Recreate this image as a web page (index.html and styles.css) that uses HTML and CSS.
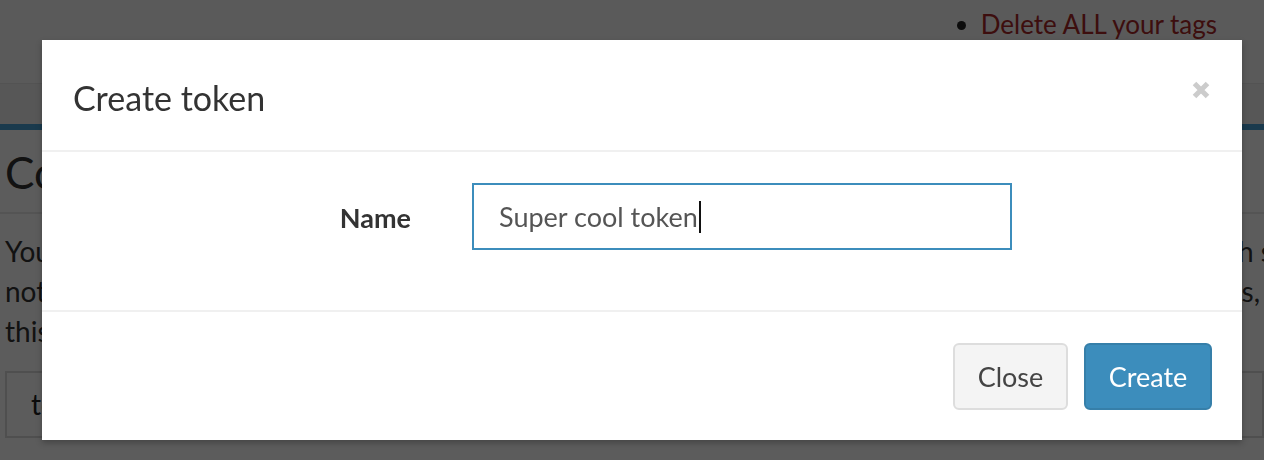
FILE: index.html
```html
<!DOCTYPE html>
<html lang="en">
<head>
<meta charset="utf-8">
<title>Create token</title>
<link rel="stylesheet" href="styles.css">
</head>
<body>
<div class="page">
  <header class="topbar">
    <ul class="actions">
      <li>Export your history</li>
      <li><a class="danger" href="#">Delete ALL your tags</a></li>
    </ul>
  </header>
  <nav class="tabs"></nav>
  <main class="content">
    <h2 class="heading">Configured tokens</h2>
    <hr class="rule">
    <div class="para">
      <div class="line"><span>You can use tokens to authenticate API requests</span><span class="cut">with s</span></div>
      <div class="line"><span>not share them with anyone. If a token leaks, revoke it</span><span>tokens,</span></div>
      <div class="line"><span>this cannot be undone</span><span></span></div>
    </div>
    <div class="tokenbox">token name</div>
  </main>
</div>
<div class="backdrop"></div>
<div class="modal" role="dialog">
  <div class="modal-header">
    <h4 class="modal-title">Create token</h4>
    <button class="close" type="button" aria-label="Close">
      <svg width="18" height="18" viewBox="0 0 18 18"><path d="M2.5 2.5 L15.5 15.5 M15.5 2.5 L2.5 15.5" stroke="#cccccc" stroke-width="5" fill="none"/></svg>
    </button>
  </div>
  <div class="modal-body">
    <div class="form-row">
      <label class="label" for="tn">Name</label>
      <div class="input"><span class="value">Super cool token</span><span class="caret"></span></div>
    </div>
  </div>
  <div class="modal-footer">
    <button class="btn btn-default" type="button">Close</button>
    <button class="btn btn-primary" type="button">Create</button>
  </div>
</div>
</body>
</html>
```

FILE: styles.css
```css
html, body {
  margin: 0;
  padding: 0;
  width: 1264px;
  height: 460px;
  overflow: hidden;
  font-family: "Lato", "Open Sans", sans-serif;
  background: #ffffff;
  color: #333;
}

.page {
  width: 1264px;
  height: 460px;
  overflow: hidden;
}

.topbar {
  height: 83px;
  background: #fafafa;
  border-bottom: 1px solid #e6e6e6;
  display: flex;
  justify-content: flex-end;
  overflow: hidden;
}

.actions {
  margin: -36px 0 0 0;
  padding: 0 47px 0 0;
  font-size: 26px;
  line-height: 40px;
  list-style: disc;
  color: #222;
}

.actions li {
  text-align: left;
}

.danger {
  color: #a82828;
  text-decoration: none;
}

.tabs {
  height: 40px;
  background: #f2f2f2;
  border-bottom: 6px solid #48a1d6;
}

.content {
  padding: 0 0 0 5px;
}

.heading {
  margin: 0;
  padding-top: 12px;
  font-size: 44px;
  font-weight: 400;
  line-height: 60px;
  color: #333;
  white-space: nowrap;
}

.rule {
  margin: 10px 0 0 -5px;
  border: 0;
  border-top: 2px solid #e8e8e8;
}

.para {
  margin-top: 17px;
  font-size: 28px;
  line-height: 40px;
  color: #333;
}

.line {
  display: flex;
  justify-content: space-between;
  white-space: nowrap;
  overflow: hidden;
  width: 1264px;
  margin-left: -5px;
  padding-left: 5px;
  padding-right: 4px;
  box-sizing: border-box;
}

.line .cut {
  margin-right: -13px;
}

.tokenbox {
  margin-top: 20px;
  height: 63px;
  border: 2px solid #dadada;
  font-size: 28px;
  line-height: 63px;
  padding-left: 24px;
  color: #222;
}

.backdrop {
  position: fixed;
  inset: 0;
  background: rgba(0, 0, 0, 0.64);
}

.modal {
  position: absolute;
  left: 42px;
  top: 40px;
  width: 1200px;
  height: 400px;
  background: #fff;
  box-shadow: 0 3px 6px rgba(0, 0, 0, 0.25);
  display: flex;
  flex-direction: column;
}

.modal-header {
  height: 112px;
  flex: none;
  box-sizing: border-box;
  padding: 0 30px 0 31px;
  border-bottom: 2px solid #f0f0f0;
  display: flex;
  align-items: center;
  justify-content: space-between;
}

.modal-title {
  margin: 0;
  font-size: 34px;
  font-weight: 400;
  color: #333;
  padding-top: 4px;
}

.close {
  border: 0;
  background: none;
  padding: 0;
  margin: -10px 2px 0 0;
  width: 18px;
  height: 18px;
  display: block;
}

.close svg {
  display: block;
}

.modal-body {
  height: 160px;
  flex: none;
  box-sizing: border-box;
  padding: 31px 30px 0 30px;
  border-bottom: 2px solid #f0f0f0;
}

.form-row {
  display: flex;
  align-items: center;
  gap: 61px;
}

.label {
  width: 339px;
  text-align: right;
  font-size: 27px;
  font-weight: 700;
  color: #333;
  padding-top: 2px;
}

.input {
  width: 540px;
  height: 67px;
  box-sizing: border-box;
  border: 2px solid #3c8dbc;
  display: flex;
  align-items: center;
  padding-left: 25px;
  font-size: 27px;
  color: #555;
}

.caret {
  display: inline-block;
  width: 2px;
  height: 32px;
  background: #111;
  margin-left: 1px;
}

.modal-footer {
  flex: 1;
  padding: 31px 30px 0 30px;
  display: flex;
  justify-content: flex-end;
  align-items: flex-start;
  gap: 16px;
}

.btn {
  height: 67px;
  box-sizing: border-box;
  border-radius: 6px;
  font-family: inherit;
  font-size: 27px;
  padding: 0;
  cursor: pointer;
}

.btn-default {
  width: 115px;
  background: #f4f4f4;
  border: 2px solid #dddddd;
  color: #444;
}

.btn-primary {
  width: 128px;
  background: #3c8dbc;
  border: 2px solid #367fa9;
  color: #fff;
}
```
